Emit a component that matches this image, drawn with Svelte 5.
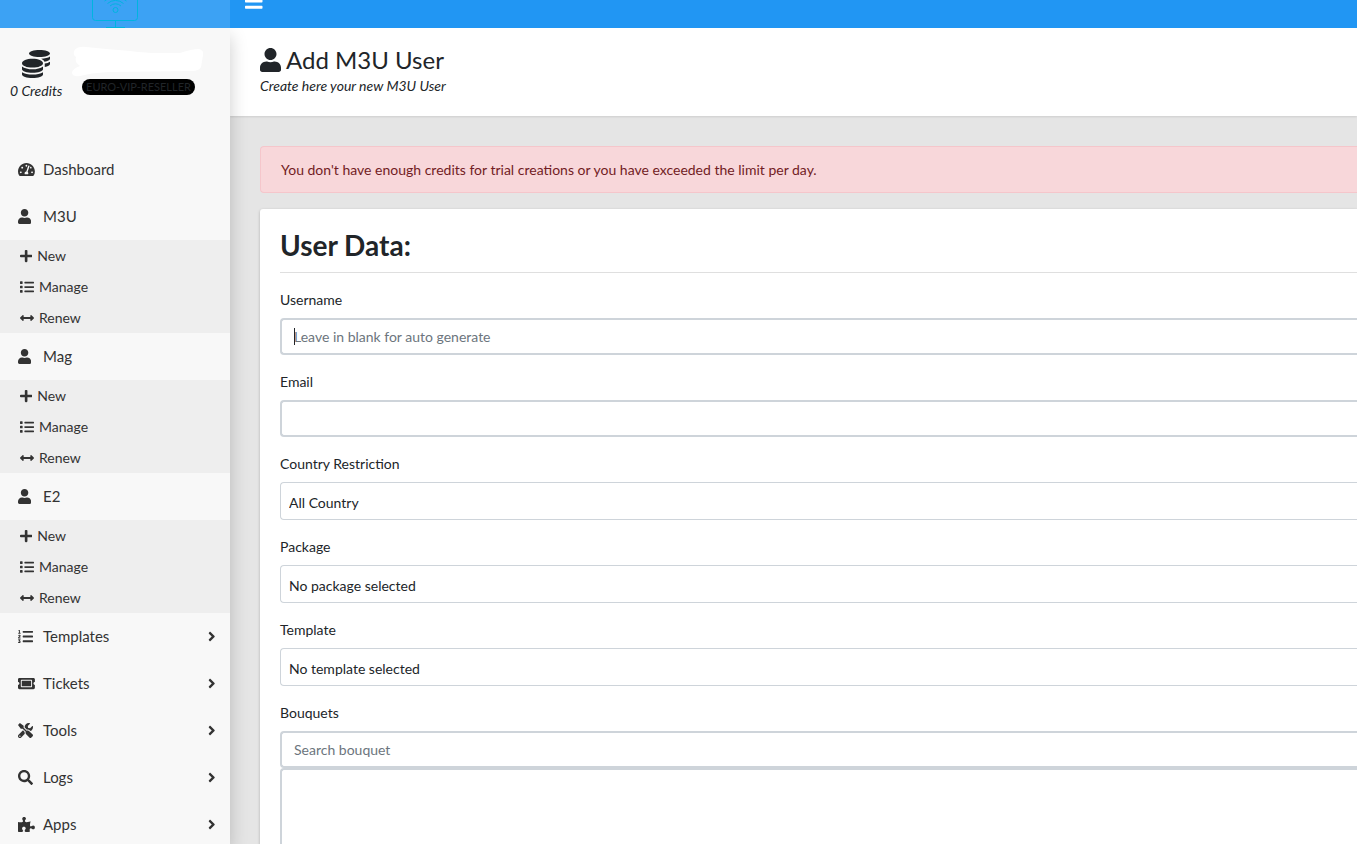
<script lang="ts">
  type Icon = { w: number; d: string };

  const icons: Record<string, Icon> = {
    bars: { w: 448, d: 'M16 132h416c8.837 0 16-7.163 16-16V76c0-8.837-7.163-16-16-16H16C7.163 60 0 67.163 0 76v40c0 8.837 7.163 16 16 16zm0 160h416c8.837 0 16-7.163 16-16v-40c0-8.837-7.163-16-16-16H16c-8.837 0-16 7.163-16 16v40c0 8.837 7.163 16 16 16zm0 160h416c8.837 0 16-7.163 16-16v-40c0-8.837-7.163-16-16-16H16c-8.837 0-16 7.163-16 16v40c0 8.837 7.163 16 16 16z' },
    user: { w: 448, d: 'M224 256c70.7 0 128-57.3 128-128S294.7 0 224 0 96 57.3 96 128s57.3 128 128 128zm89.6 32h-16.7c-22.2 10.2-46.9 16-72.9 16s-50.6-5.8-72.9-16h-16.7C60.2 288 0 348.2 0 422.4V464c0 26.5 21.5 48 48 48h352c26.5 0 48-21.5 48-48v-41.6c0-74.2-60.2-134.4-134.4-134.4z' },
    coins: { w: 512, d: 'M0 405.3V448c0 35.3 86 64 192 64s192-28.7 192-64v-42.7C342.7 434.4 267.2 448 192 448S41.3 434.4 0 405.3zM320 128c106 0 192-28.7 192-64S426 0 320 0 128 28.7 128 64s86 64 192 64zM0 300.4V352c0 35.3 86 64 192 64s192-28.7 192-64v-51.6c-41.3 34-116.9 51.6-192 51.6S41.3 334.4 0 300.4zm416 11c57.3-11.1 96-31.7 96-55.4v-42.7c-23.2 16.4-57.3 27.6-96 34.5v63.6zM192 160C86 160 0 195.8 0 240s86 80 192 80 192-35.8 192-80-86-80-192-80zm219.3 56.3c60-10.8 100.7-32 100.7-56.3v-42.7c-35.5 25.1-96.5 38.6-160.7 41.8 29.5 14.3 51.2 33.5 60 57.2z' },
    dashboard: { w: 576, d: 'M288 32C128.94 32 0 160.94 0 320c0 52.8 14.25 102.26 39.06 144.8 5.61 9.62 16.3 15.2 27.44 15.2h443c11.14 0 21.83-5.58 27.44-15.2C561.75 422.26 576 372.8 576 320c0-159.06-128.94-288-288-288zm0 64c14.71 0 26.58 10.13 30.32 23.65-1.11 2.26-2.64 4.23-3.45 6.67l-9.22 27.67c-5.13 3.49-10.97 6.01-17.64 6.01-17.67 0-32-14.33-32-32S270.33 96 288 96zM96 384c-17.67 0-32-14.33-32-32s14.33-32 32-32 32 14.33 32 32-14.33 32-32 32zm48-160c-17.67 0-32-14.33-32-32s14.33-32 32-32 32 14.33 32 32-14.33 32-32 32zm246.77-72.41l-61.33 184C343.13 347.33 352 364.54 352 384c0 11.72-3.38 22.55-8.88 32H232.88c-5.5-9.45-8.88-20.28-8.88-32 0-33.94 26.5-61.43 59.9-63.59l61.34-184.01c4.17-12.56 17.73-19.45 30.36-15.17 12.57 4.19 19.35 17.79 15.17 30.36zm14.66 57.2l15.52-46.55c3.47-1.29 7.13-2.23 11.05-2.23 17.67 0 32 14.33 32 32s-14.33 32-32 32c-11.38-.01-20.89-6.28-26.57-15.22zM480 384c-17.67 0-32-14.33-32-32s14.33-32 32-32 32 14.33 32 32-14.33 32-32 32z' },
    plus: { w: 448, d: 'M416 208H272V64c0-17.67-14.33-32-32-32h-32c-17.67 0-32 14.33-32 32v144H32c-17.67 0-32 14.33-32 32v32c0 17.67 14.33 32 32 32h144v144c0 17.67 14.33 32 32 32h32c17.67 0 32-14.33 32-32V304h144c17.67 0 32-14.33 32-32v-32c0-17.67-14.33-32-32-32z' },
    list: { w: 512, d: 'M80 368H16a16 16 0 0 0-16 16v64a16 16 0 0 0 16 16h64a16 16 0 0 0 16-16v-64a16 16 0 0 0-16-16zm0-320H16A16 16 0 0 0 0 64v64a16 16 0 0 0 16 16h64a16 16 0 0 0 16-16V64a16 16 0 0 0-16-16zm0 160H16a16 16 0 0 0-16 16v64a16 16 0 0 0 16 16h64a16 16 0 0 0 16-16v-64a16 16 0 0 0-16-16zm416 176H176a16 16 0 0 0-16 16v32a16 16 0 0 0 16 16h320a16 16 0 0 0 16-16v-32a16 16 0 0 0-16-16zm0-320H176a16 16 0 0 0-16 16v32a16 16 0 0 0 16 16h320a16 16 0 0 0 16-16V80a16 16 0 0 0-16-16zm0 160H176a16 16 0 0 0-16 16v32a16 16 0 0 0 16 16h320a16 16 0 0 0 16-16v-32a16 16 0 0 0-16-16z' },
    arrows: { w: 512, d: 'M377.941 169.941V216H134.059v-46.059c0-21.382-25.851-32.09-40.971-16.971L7.029 239.029c-9.373 9.373-9.373 24.568 0 33.941l86.059 86.059c15.119 15.119 40.971 4.411 40.971-16.971V296h243.882v46.059c0 21.382 25.851 32.09 40.971 16.971l86.059-86.059c9.373-9.373 9.373-24.568 0-33.941l-86.059-86.059c-15.119-15.12-40.971-4.412-40.971 16.97z' },
    listOl: { w: 512, d: 'M61.77 401l17.5-20.15a19.92 19.92 0 0 0 5.07-14.19v-3.31C84.34 356 80.5 352 73 352H16a8 8 0 0 0-8 8v16a8 8 0 0 0 8 8h22.83a157.41 157.41 0 0 0-11 12.31l-5.61 7c-4 5.07-5.25 10.13-2.8 14.88l1.05 1.93c3 5.76 6.29 7.88 12.25 7.88h4.73c10.33 0 15.94 2.44 15.94 9.09 0 4.72-4.2 8.22-14.36 8.22a41.54 41.54 0 0 1-15.47-3.12c-6.49-3.88-11.74-3.5-15.6 3.12l-5.59 9.31c-3.72 6.13-3.19 11.72 2.63 15.94 7.71 4.69 20.38 9.44 37 9.44 34.16 0 48.5-22.75 48.5-44.12-.03-14.38-9.12-29.76-28.73-34.88zM496 224H176a16 16 0 0 0-16 16v32a16 16 0 0 0 16 16h320a16 16 0 0 0 16-16v-32a16 16 0 0 0-16-16zm0-160H176a16 16 0 0 0-16 16v32a16 16 0 0 0 16 16h320a16 16 0 0 0 16-16V80a16 16 0 0 0-16-16zm0 320H176a16 16 0 0 0-16 16v32a16 16 0 0 0 16 16h320a16 16 0 0 0 16-16v-32a16 16 0 0 0-16-16zM16 160h64a8 8 0 0 0 8-8v-16a8 8 0 0 0-8-8H64V40a8 8 0 0 0-8-8H32a8 8 0 0 0-7.14 4.42l-8 16A8 8 0 0 0 24 64h8v64H16a8 8 0 0 0-8 8v16a8 8 0 0 0 8 8zm-3.91 160H80a8 8 0 0 0 8-8v-16a8 8 0 0 0-8-8H41.32c3.29-10.29 48.34-18.68 48.34-56.44 0-29.06-25-39.56-44.47-39.56-21.36 0-33.8 10-40.46 18.75-4.37 5.59-3 10.84 2.8 15.37l8.58 6.88c5.61 4.56 11 2.47 16.12-2.44a13.44 13.44 0 0 1 9.46-3.84c3.33 0 9.28 1.56 9.28 8.75C51 248.19 0 257.31 0 304.59v4C0 316 5.08 320 12.09 320z' },
    ticket: { w: 576, d: 'M128 160h320v192H128V160zm400 96c0 26.51 21.49 48 48 48v96c0 26.51-21.49 48-48 48H48c-26.51 0-48-21.49-48-48v-96c26.51 0 48-21.49 48-48s-21.49-48-48-48v-96c0-26.51 21.49-48 48-48h480c26.51 0 48 21.49 48 48v96c-26.51 0-48 21.49-48 48zm-48-104c0-13.255-10.745-24-24-24H120c-13.255 0-24 10.745-24 24v208c0 13.255 10.745 24 24 24h336c13.255 0 24-10.745 24-24V152z' },
    tools: { w: 512, d: 'M501.1 395.7L384 278.6c-23.1-23.1-57.6-27.6-85.4-13.9L192 158.1V96L64 0 0 64l96 128h62.1l106.6 106.6c-13.6 27.8-9.2 62.3 13.9 85.4l117.1 117.1c14.6 14.6 38.2 14.6 52.7 0l52.7-52.7c14.5-14.6 14.5-38.2 0-52.7zM331.7 225c28.3 0 54.9 11 74.9 31l19.4 19.4c15.8-6.9 30.8-16.5 43.8-29.5 37.1-37.1 49.7-89.3 37.9-136.7-2.2-9-13.5-12.1-20.1-5.5l-74.4 74.4-67.9-11.3L334 98.9l74.4-74.4c6.6-6.6 3.4-17.9-5.7-20.2-47.4-11.7-99.6.9-136.6 37.9-28.5 28.5-41.9 66.1-41.2 103.6l82.1 82.1c8.1-1.9 16.5-2.9 24.7-2.9zm-103.9 82l-56.7-56.7L18.7 402.8c-25 25-25 65.5 0 90.5s65.5 25 90.5 0l123.6-123.6c-7.6-19.9-9.9-41.6-5-62.7zM64 472c-13.2 0-24-10.8-24-24 0-13.3 10.7-24 24-24s24 10.7 24 24c0 13.2-10.7 24-24 24z' },
    search: { w: 512, d: 'M505 442.7L405.3 343c-4.5-4.5-10.6-7-17-7H372c27.6-35.3 44-79.7 44-128C416 93.1 322.9 0 208 0S0 93.1 0 208s93.1 208 208 208c48.3 0 92.7-16.4 128-44v16.3c0 6.4 2.5 12.5 7 17l99.7 99.7c9.4 9.4 24.6 9.4 33.9 0l28.3-28.3c9.4-9.4 9.4-24.6.1-34zM208 336c-70.7 0-128-57.2-128-128 0-70.7 57.2-128 128-128 70.7 0 128 57.2 128 128 0 70.7-57.2 128-128 128z' },
    puzzle: { w: 576, d: 'M519.442 288.651c-41.519 0-59.5 31.593-82.058 31.593C377.409 320.244 432 144 432 144s-196.288 80-196.288-3.297c0-35.827 36.288-46.25 36.288-85.985C272 19.216 243.885 0 210.539 0c-34.654 0-66.366 18.891-66.366 56.346 0 41.364 31.711 59.277 31.711 81.75C175.885 207.719 0 166.758 0 166.758v333.237s178.635 41.047 178.635-28.662c0-22.473-40-40.107-40-81.471 0-37.456 29.25-56.346 63.577-56.346 33.673 0 61.788 19.216 61.788 54.717 0 39.735-36.288 50.158-36.288 85.985 0 60.803 129.675 25.73 181.23 25.73 0 0-34.725-120.101 25.827-120.101 35.962 0 46.423 36.152 86.308 36.152C556.712 416 576 387.99 576 354.443c0-34.199-18.962-65.792-56.558-65.792z' },
    angle: { w: 256, d: 'M224.3 273l-136 136c-9.4 9.4-24.6 9.4-33.9 0l-22.6-22.6c-9.4-9.4-9.4-24.6 0-33.9l96.4-96.4-96.4-96.4c-9.4-9.4-9.4-24.6 0-33.9L54.3 103c9.4-9.4 24.6-9.4 33.9 0l136 136c9.5 9.4 9.5 24.6.1 34z' }
  };

  const actions = [
    { label: 'New', icon: 'plus' },
    { label: 'Manage', icon: 'list' },
    { label: 'Renew', icon: 'arrows' }
  ];

  const menu = [
    { label: 'Dashboard', icon: 'dashboard' },
    { label: 'M3U', icon: 'user', children: actions },
    { label: 'Mag', icon: 'user', children: actions },
    { label: 'E2', icon: 'user', children: actions },
    { label: 'Templates', icon: 'listOl', more: true },
    { label: 'Tickets', icon: 'ticket', more: true },
    { label: 'Tools', icon: 'tools', more: true },
    { label: 'Logs', icon: 'search', more: true },
    { label: 'Apps', icon: 'puzzle', more: true }
  ];

  const selects = [
    { id: 'country', label: 'Country Restriction', value: 'All Country' },
    { id: 'package', label: 'Package', value: 'No package selected' },
    { id: 'template', label: 'Template', value: 'No template selected' }
  ];

  let username = $state('');
  let email = $state('');
  let bouquet = $state('');
</script>

{#snippet icon(name: string)}
  <svg class="icon" viewBox="0 0 {icons[name].w} 512" fill="currentColor" aria-hidden="true">
    <path d={icons[name].d} />
  </svg>
{/snippet}

<div class="app">
  <header class="header">
    <a class="logo" href="#home" aria-label="Home">
      <svg width="48" height="50" viewBox="0 0 48 50" fill="none" stroke="#00b4e0" stroke-width="1">
        <rect x="1.5" y="8.5" width="45" height="34" rx="3" />
        <path d="M24.5 43v6M15 49.5h19" />
        <circle cx="24.5" cy="32" r="2.5" />
        <path d="M19 28a8 8 0 0 1 11 0M16.500 25.500a12 12 0 0 1 16 0M13.500 23a16 16 0 0 1 22 0" />
      </svg>
    </a>
    <button class="toggle" aria-label="Toggle sidebar">{@render icon('bars')}</button>
  </header>

  <div class="body">
    <aside class="sidebar">
      <div class="account">
        <div class="credits">
          {@render icon('coins')}
          <em>0 Credits</em>
        </div>
        <div class="profile">
          <svg width="132" height="32" viewBox="0 0 132 32" fill="#fff" aria-hidden="true">
            <path d="M2 5Q5 0 14 1L34 3L58 5Q76 7 84 7L108 7Q120 3 127 3Q132 4 131 9L129 21Q127 25 120 25L36 26Q18 27 8 30Q1 31 0 27Q0 23 8 20Q2 16 4 11Q1 9 2 5z" />
          </svg>
          <span class="badge">EURO-VIP-RESELLER</span>
        </div>
      </div>

      <nav class="menu">
        {#each menu as item}
          <a class="menu-item" href="#{item.label.toLowerCase()}">
            <span class="menu-icon">{@render icon(item.icon)}</span>
            <span class="menu-label">{item.label}</span>
            {#if item.more}
              {@render icon('angle')}
            {/if}
          </a>
          {#if item.children}
            <div class="submenu">
              {#each item.children as child}
                <a class="submenu-item" href="#{item.label.toLowerCase()}-{child.label.toLowerCase()}">
                  {@render icon(child.icon)}
                  {child.label}
                </a>
              {/each}
            </div>
          {/if}
        {/each}
      </nav>
    </aside>

    <main class="content">
      <div class="title">
        <h1>{@render icon('user')}Add M3U User</h1>
        <p>Create here your new M3U User</p>
      </div>

      <div class="page">
        <div class="alert" role="alert">
          You don't have enough credits for trial creations or you have exceeded the limit per day.
        </div>

        <form class="tile">
          <h2>User Data:</h2>

          <div class="group">
            <label for="username">Username</label>
            <div class="field">
              <input id="username" type="text" placeholder="Leave in blank for auto generate" bind:value={username} />
              <span class="caret"></span>
            </div>
          </div>

          <div class="group">
            <label for="email">Email</label>
            <input id="email" type="email" bind:value={email} />
          </div>

          {#each selects as field}
            <div class="group">
              <label for={field.id}>{field.label}</label>
              <select id={field.id}>
                <option>{field.value}</option>
              </select>
            </div>
          {/each}

          <div class="group">
            <label for="bouquet">Bouquets</label>
            <input id="bouquet" type="text" placeholder="Search bouquet" bind:value={bouquet} />
            <select class="bouquets" multiple aria-label="Bouquet list"></select>
          </div>
        </form>
      </div>
    </main>
  </div>
</div>

<style>
  :global(body) {
    margin: 0;
  }

  .app {
    display: flex;
    flex-direction: column;
    height: 100vh;
    overflow: hidden;
    font-family: Lato, "Liberation Sans", sans-serif;
    font-size: 14px;
    line-height: 21px;
    color: #212529;
    background: #e5e5e5;
  }

  .app * {
    box-sizing: border-box;
  }

  a {
    color: inherit;
    text-decoration: none;
  }

  .icon {
    display: block;
    flex: none;
    height: 1em;
  }

  .header {
    display: flex;
    flex: none;
    height: 50px;
    margin-top: -22px;
    background: #2196f3;
    position: relative;
    z-index: 2;
  }

  .logo {
    display: flex;
    justify-content: center;
    width: 230px;
    background: rgba(255, 255, 255, 0.12);
  }

  .toggle {
    padding: 0 15px 4px;
    border: 0;
    background: none;
    color: #fff;
    font-size: 20px;
  }

  .body {
    display: flex;
    flex: 1;
    min-height: 0;
  }

  .sidebar {
    flex: none;
    width: 230px;
    background: #f8f8f8;
    box-shadow: 0 8px 17px rgba(0, 0, 0, 0.2);
    position: relative;
    z-index: 1;
  }

  .account {
    display: flex;
    gap: 10px;
    height: 118px;
    padding: 18px 10px 0;
  }

  .credits {
    display: flex;
    flex-direction: column;
    align-items: center;
    gap: 2px;
    padding-top: 4px;
  }

  .credits .icon {
    font-size: 28px;
  }

  .profile {
    display: flex;
    flex-direction: column;
    align-items: center;
    gap: 1px;
  }

  .profile svg {
    display: block;
  }

  .badge {
    padding: 0 4px;
    border-radius: 8px;
    background: #000;
    font-size: 11px;
    line-height: 16px;
  }

  .menu-item {
    display: flex;
    align-items: center;
    height: 47px;
    padding: 0 15px 0 18px;
    font-size: 15px;
    color: #333;
  }

  .menu-icon {
    width: 25px;
  }

  .menu-label {
    flex: 1;
  }

  .submenu {
    background: #eee;
  }

  .submenu-item {
    display: flex;
    align-items: center;
    gap: 5px;
    height: 31px;
    padding: 0 20px;
    color: #333;
  }

  .content {
    flex: 1;
    min-width: 0;
  }

  .title {
    height: 88px;
    padding: 18px 30px;
    background: #fff;
    box-shadow: 0 1px 2px rgba(0, 0, 0, 0.1);
  }

  h1 {
    display: flex;
    align-items: center;
    gap: 5px;
    margin: 0;
    padding-bottom: 2px;
    font-size: 24px;
    font-weight: 400;
    line-height: 27px;
  }

  .title p {
    margin: 0;
    font-style: italic;
  }

  .page {
    padding: 30px 0 0 30px;
  }

  .alert {
    padding: 12px 20px;
    margin-bottom: 16px;
    border: 1px solid #f5c6cb;
    border-right: 0;
    border-radius: 4px 0 0 4px;
    background: #f8d7da;
    color: #721c24;
  }

  .tile {
    padding: 20px 0 20px 20px;
    border-radius: 3px 0 0 0;
    background: #fff;
    box-shadow: 0 1px 3px rgba(0, 0, 0, 0.25);
  }

  h2 {
    margin: 0 0 16px;
    padding-bottom: 10px;
    border-bottom: 1px solid #dfdfdf;
    font-size: 28px;
    font-weight: 700;
    line-height: 33px;
  }

  .group {
    margin-bottom: 16px;
  }

  label {
    display: block;
    margin-bottom: 8px;
  }

  input,
  select {
    display: block;
    width: 100%;
    margin: 0;
    border: 2px solid #ced4da;
    border-right: 0;
    border-radius: 4px 0 0 4px;
    outline: none;
    background: #fff;
    color: #212529;
    font: inherit;
    appearance: none;
  }

  input {
    height: 37px;
    padding: 0 12px;
  }

  input::placeholder {
    color: #6c757d;
    opacity: 1;
  }

  select {
    height: 38px;
    padding: 2px 8px 0;
    border-width: 1px 0 1px 1px;
  }

  .bouquets {
    height: 200px;
    border-width: 2px 0 2px 2px;
  }

  .field {
    position: relative;
  }

  .caret {
    position: absolute;
    top: 10px;
    left: 14px;
    width: 1px;
    height: 17px;
    background: #212529;
  }
</style>
